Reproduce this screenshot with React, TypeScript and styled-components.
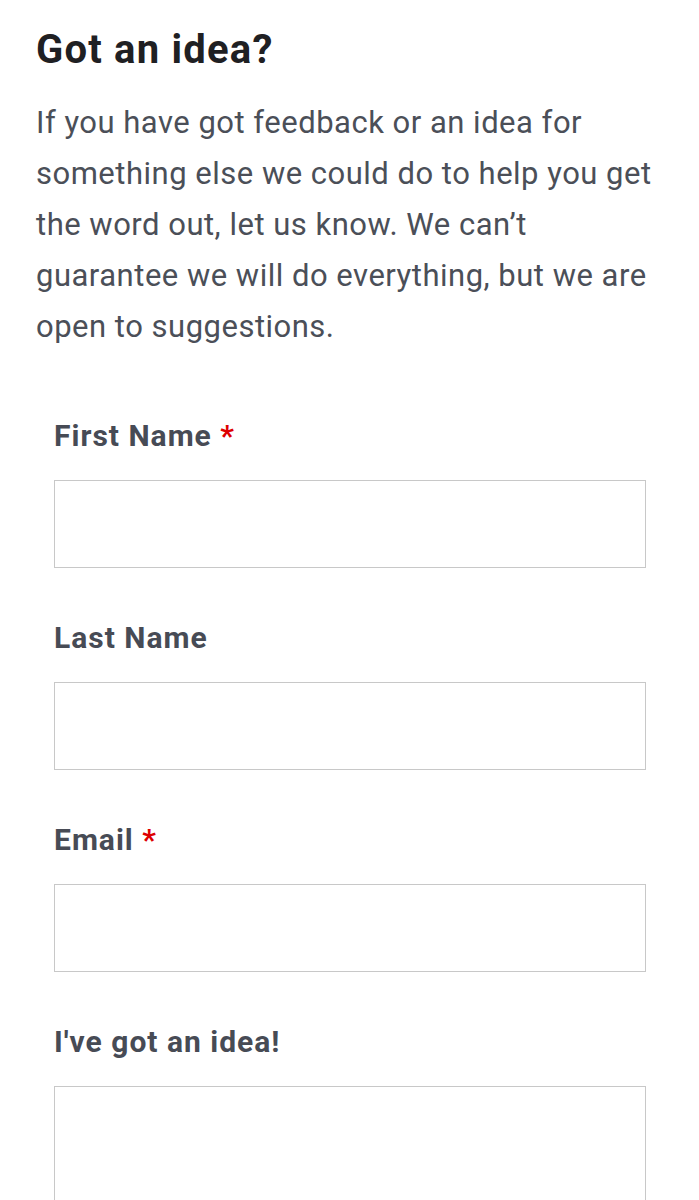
import styled, { createGlobalStyle } from "styled-components";

const GlobalStyle = createGlobalStyle`
  body {
    margin: 0;
    background: #ffffff;
    font-family: Roboto, "Liberation Sans", sans-serif;
  }
`;

interface FieldProps {
  label: string;
  required?: boolean;
  tall?: boolean;
}

const Field = ({ label, required, tall }: FieldProps) => {
  return (
    <FieldBox>
      <Label>
        {label}
        {required && <Star> *</Star>}
      </Label>
      {tall ? <TextArea /> : <Input type="text" />}
    </FieldBox>
  );
};

const App = () => {
  return (
    <>
      <GlobalStyle />
      <Page>
        <Heading>Got an idea?</Heading>
        <Intro>
          If you have got feedback or an idea for something else we could do
          to help you get the word out, let us know. We can’t guarantee we
          will do everything, but we are open to suggestions.
        </Intro>
        <Form>
          <Field label="First Name" required />
          <Field label="Last Name" />
          <Field label="Email" required />
          <Field label="I've got an idea!" tall />
        </Form>
      </Page>
    </>
  );
};

const Page = styled.div`
  padding: 27px 36px 0 36px;
`;

const Heading = styled.h2`
  margin: 0;
  font-size: 40px;
  line-height: 45px;
  font-weight: 700;
  letter-spacing: 1.2px;
  color: #1f2023;
`;

const Intro = styled.p`
  margin: 25px 0 0 0;
  font-size: 31px;
  line-height: 51px;
  letter-spacing: 0.5px;
  color: #4b4f58;
`;

const Form = styled.form`
  margin-top: 67px;
  padding: 0 17px 0 18px;
  display: flex;
  flex-direction: column;
  gap: 53px;
`;

const FieldBox = styled.div`
  display: flex;
  flex-direction: column;
  gap: 27px;
`;

const Label = styled.label`
  font-size: 30px;
  line-height: 34px;
  font-weight: 700;
  letter-spacing: 1px;
  color: #474b55;
`;

const Star = styled.span`
  color: #dd0000;
`;

const Input = styled.input`
  box-sizing: border-box;
  width: 100%;
  height: 88px;
  margin: 0;
  border: 1px solid #c8c8c8;
  border-radius: 0;
  background: #ffffff;
  font-size: 24px;
  font-family: inherit;
  padding: 0 16px;
`;

const TextArea = styled.textarea`
  box-sizing: border-box;
  width: 100%;
  height: 114px;
  margin: 0;
  border: 1px solid #c8c8c8;
  border-bottom: none;
  border-radius: 0;
  background: #ffffff;
  font-size: 24px;
  font-family: inherit;
  resize: none;
`;

export default App;
